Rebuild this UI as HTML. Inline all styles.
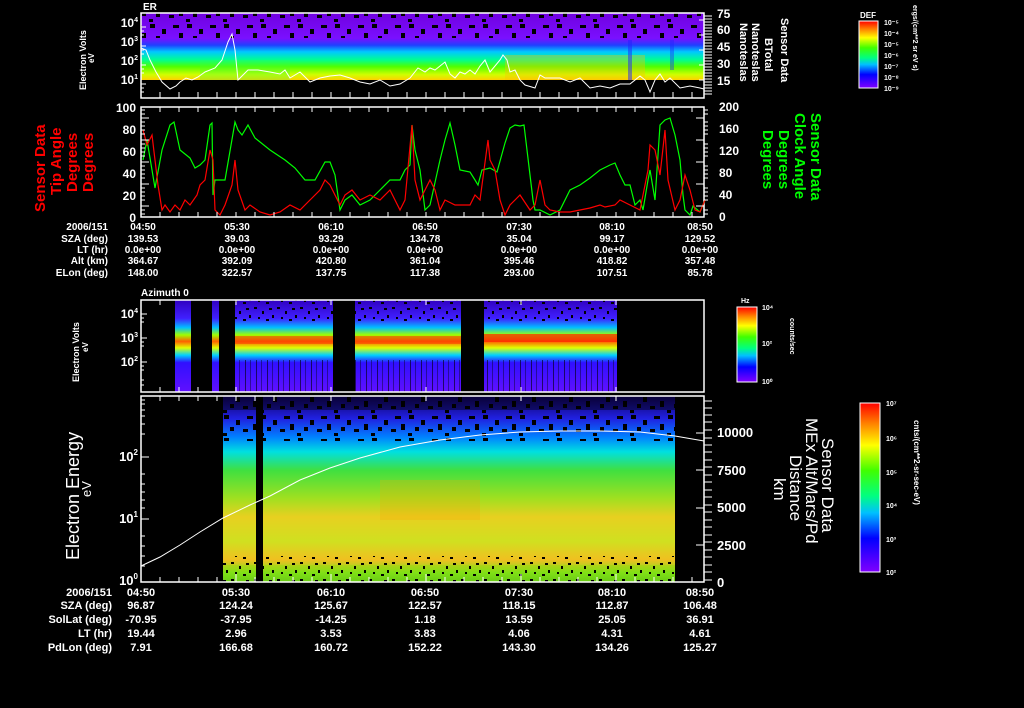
<!DOCTYPE html>
<html><head><meta charset="utf-8"><style>
html,body{margin:0;padding:0;background:#000;width:1024px;height:708px;overflow:hidden}
svg{display:block}
text{font-family:"Liberation Sans",sans-serif;font-weight:bold;fill:#fff}
</style></head><body>
<svg width="1024" height="708" viewBox="0 0 1024 708" xmlns="http://www.w3.org/2000/svg">
<defs>
<linearGradient id="rb" x1="0" y1="1" x2="0" y2="0">
<stop offset="0" stop-color="#8000ff"/><stop offset="0.2" stop-color="#0000ff"/><stop offset="0.35" stop-color="#00c0ff"/><stop offset="0.45" stop-color="#00ff80"/><stop offset="0.6" stop-color="#40ff00"/><stop offset="0.75" stop-color="#ffff00"/><stop offset="0.88" stop-color="#ff8000"/><stop offset="1" stop-color="#ff0000"/>
</linearGradient>
<linearGradient id="p1" x1="0" y1="0" x2="0" y2="1">
<stop offset="0" stop-color="#7000e0"/><stop offset="0.38" stop-color="#7a10ff"/><stop offset="0.48" stop-color="#2040ff"/><stop offset="0.58" stop-color="#00c8ff"/><stop offset="0.7" stop-color="#00ff90"/><stop offset="0.8" stop-color="#50ff00"/><stop offset="0.92" stop-color="#d0ff00"/><stop offset="1" stop-color="#ffd000"/>
</linearGradient>
<linearGradient id="p3" x1="0" y1="0" x2="0" y2="1">
<stop offset="0" stop-color="#3000c0"/><stop offset="0.2" stop-color="#4020ff"/><stop offset="0.3" stop-color="#00c0ff"/><stop offset="0.38" stop-color="#a0ff00"/><stop offset="0.45" stop-color="#ff6000"/><stop offset="0.52" stop-color="#e0ff00"/><stop offset="0.6" stop-color="#00d0ff"/><stop offset="0.68" stop-color="#3010ff"/><stop offset="1" stop-color="#6010ff"/>
</linearGradient>
<linearGradient id="p4" x1="0" y1="0" x2="0" y2="1">
<stop offset="0" stop-color="#100060"/><stop offset="0.12" stop-color="#2020e0"/><stop offset="0.22" stop-color="#0080ff"/><stop offset="0.3" stop-color="#00e0e0"/><stop offset="0.4" stop-color="#40e040"/><stop offset="0.55" stop-color="#a0e020"/><stop offset="0.65" stop-color="#e8d020"/><stop offset="0.78" stop-color="#d0e020"/><stop offset="0.88" stop-color="#f0c020"/><stop offset="0.95" stop-color="#80e020"/><stop offset="1" stop-color="#60c020"/>
</linearGradient>
<pattern id="spk" width="37" height="23" patternUnits="userSpaceOnUse">
<rect x="2" y="1" width="5" height="4" fill="#000"/><rect x="14" y="6" width="4" height="5" fill="#000"/><rect x="25" y="2" width="6" height="3" fill="#000"/><rect x="8" y="13" width="4" height="4" fill="#000"/><rect x="21" y="15" width="5" height="3" fill="#000"/><rect x="31" y="10" width="4" height="6" fill="#000"/><rect x="1" y="19" width="4" height="3" fill="#000"/>
</pattern>
<pattern id="spk2" width="23" height="17" patternUnits="userSpaceOnUse">
<rect x="1" y="1" width="3" height="2" fill="#000"/><rect x="9" y="5" width="2" height="3" fill="#000"/><rect x="16" y="2" width="3" height="2" fill="#000"/><rect x="5" y="11" width="2" height="2" fill="#000"/><rect x="13" y="13" width="3" height="2" fill="#000"/><rect x="19" y="9" width="2" height="3" fill="#000"/>
</pattern>
<pattern id="vln" width="11" height="10" patternUnits="userSpaceOnUse">
<rect x="3" y="0" width="1" height="10" fill="#000" opacity="0.6"/><rect x="8" y="0" width="1" height="10" fill="#000" opacity="0.4"/>
</pattern>
</defs>

<!-- Panel 1 -->
<text x="143" y="10" font-size="10">ER</text>
<rect x="141" y="13" width="563" height="67" fill="url(#p1)"/>
<rect x="141" y="13" width="563" height="25" fill="url(#spk)"/>
<rect x="200" y="60" width="90" height="20" fill="#40ff40" opacity="0.3"/>
<rect x="505" y="55" width="140" height="25" fill="#ffc000" opacity="0.35"/>
<rect x="628" y="40" width="4" height="40" fill="#2020ff" opacity="0.5"/>
<rect x="670" y="40" width="4" height="30" fill="#2020ff" opacity="0.4"/>
<polyline fill="none" stroke="#fff" stroke-width="1" points="141,48 146,50 150,60 156,72 162,82 170,89 176,86 180,82 186,78 192,80 198,77 205,72 210,70 215,68 222,60 228,42 232,34 235,50 238,80 242,76 248,70 258,70 270,72 280,74 285,70 290,78 300,72 310,82 320,78 330,76 340,75 350,78 360,82 370,84 380,80 390,86 400,84 410,78 418,68 425,72 430,68 435,70 445,62 450,74 455,78 460,72 465,74 470,70 475,74 480,66 485,60 490,72 495,66 500,60 503,55 507,60 510,72 515,70 520,80 525,85 535,88 540,75 545,78 560,78 570,82 580,78 590,88 600,86 610,88 620,84 630,84 640,76 645,80 650,92 655,80 660,74 665,82 670,78 680,88 690,86 700,88 704,89"/>
<rect x="141" y="13" width="563" height="85" fill="none" stroke="#fff" stroke-width="1.5"/>
<g stroke="#fff" stroke-width="1">
<path d="M141,27h5M141,46h5M141,65h5M141,84h5M141,31h3M141,35h3M141,50h3M141,54h3M141,69h3M141,73h3M141,88h3M141,92h3"/>
<path d="M704,13v85M704,20h-5M704,35h-5M704,50h-5M704,65h-5M704,80h-5M704,16h8M704,19h8M704,22h8M704,25h8M704,28h8M704,31h8M704,34h8M704,37h8M704,40h8M704,43h8M704,46h8M704,49h8M704,52h8M704,55h8M704,58h8M704,61h8M704,64h8M704,67h8M704,70h8M704,73h8M704,76h8M704,79h8M704,82h8M704,85h8M704,88h8M704,91h8M704,94h8"/>
<path d="M160,98v-6M179,98v-6M198,98v-6M217,98v-6M236,98v-6M255,98v-6M274,98v-6M293,98v-6M312,98v-6M331,98v-6M350,98v-6M369,98v-6M388,98v-6M407,98v-6M426,98v-6M445,98v-6M464,98v-6M483,98v-6M502,98v-6M521,98v-6M540,98v-6M559,98v-6M578,98v-6M597,98v-6M616,98v-6M635,98v-6M654,98v-6M673,98v-6M692,98v-6"/>
</g>
<g font-size="12" text-anchor="end"><text x="138" y="27">10<tspan font-size="7" dy="-5">4</tspan></text><text x="138" y="46">10<tspan font-size="7" dy="-5">3</tspan></text><text x="138" y="65">10<tspan font-size="7" dy="-5">2</tspan></text><text x="138" y="84">10<tspan font-size="7" dy="-5">1</tspan></text></g>
<g font-size="12"><text x="717" y="18">75</text><text x="717" y="34">60</text><text x="717" y="51">45</text><text x="717" y="68">30</text><text x="717" y="85">15</text></g>
<text font-size="9" transform="translate(86,90) rotate(-90)">Electron Volts</text>
<text font-size="8" transform="translate(94,63) rotate(-90)">eV</text>
<g font-size="11" transform="rotate(90)"><text x="18" y="-781">Sensor Data</text><text x="38" y="-765">BTotal</text><text x="23" y="-752">Nanoteslas</text><text x="23" y="-740">Nanoteslas</text></g>
<text x="860" y="18" font-size="8">DEF</text>
<rect x="859" y="21" width="19" height="67" fill="url(#rb)" stroke="#fff"/>
<g font-size="7"><text x="884" y="25">10⁻⁵</text><text x="884" y="36">10⁻⁴</text><text x="884" y="47">10⁻⁵</text><text x="884" y="58">10⁻⁶</text><text x="884" y="69">10⁻⁷</text><text x="884" y="80">10⁻⁸</text><text x="884" y="91">10⁻⁹</text></g>
<text font-size="7" transform="translate(913,5) rotate(90)">ergs/(cm**2 sr eV s)</text>

<!-- Panel 2 -->
<rect x="141" y="107" width="563" height="110" fill="none" stroke="#fff" stroke-width="1.5"/>
<polyline fill="none" stroke="#00ff00" stroke-width="1.2" points="143,160 147,140 152,170 155,188 162,150 170,125 174,122 180,150 190,158 195,168 200,165 205,160 210,125 212,123 213,195 215,180 225,180 235,122 238,130 242,135 248,125 255,138 270,150 285,160 295,168 305,180 315,180 325,162 330,162 335,175 340,210 345,200 352,195 360,205 370,200 380,190 390,180 400,180 405,170 410,165 412,125 415,150 420,170 425,210 430,205 440,160 445,140 450,123 455,145 460,170 470,172 475,180 478,185 482,170 490,168 497,172 505,143 510,128 515,125 520,126 524,125 533,200 535,210 540,210 550,215 560,210 570,190 580,185 590,178 600,170 610,165 615,163 620,175 625,185 630,185 635,205 640,200 643,210 648,180 650,170 655,200 660,125 665,120 670,118 675,135 680,160 683,195 685,210 690,215 693,206 700,212 705,200"/>
<polyline fill="none" stroke="#ff0000" stroke-width="1.2" points="143,130 147,145 152,135 158,185 162,210 165,205 170,212 175,205 180,210 185,200 190,205 197,195 200,185 205,180 210,150 213,160 215,210 220,215 225,205 232,185 235,160 238,190 245,210 250,205 260,212 270,215 280,212 290,205 300,210 310,200 320,190 325,180 330,185 340,205 345,195 352,190 360,200 370,195 380,200 390,190 400,210 405,200 412,125 415,180 420,200 430,180 435,190 440,210 445,200 455,205 465,205 470,205 475,195 480,200 488,140 490,160 495,170 500,200 505,215 510,205 515,200 520,195 530,210 535,205 540,180 545,205 550,210 560,212 570,212 580,210 590,208 600,205 605,207 615,205 620,200 630,205 640,210 648,170 650,145 655,150 660,175 665,130 668,180 675,210 680,200 685,175 690,190 695,210 700,212 705,200"/>
<g stroke="#fff" stroke-width="1">
<path d="M141,118h8M141,140h8M141,162h8M141,184h8M141,206h8M141,110h4M141,114h4M141,122h4M141,126h4M141,130h4M141,134h4M141,144h4M141,148h4M141,152h4M141,156h4M141,166h4M141,170h4M141,174h4M141,178h4M141,188h4M141,192h4M141,196h4M141,200h4M141,210h4M141,214h4"/>
<path d="M704,118h-8M704,140h-8M704,162h-8M704,184h-8M704,206h-8M704,110h4M704,114h4M704,122h4M704,126h4M704,130h4M704,134h4M704,144h4M704,148h4M704,152h4M704,156h4M704,166h4M704,170h4M704,174h4M704,178h4M704,188h4M704,192h4M704,196h4M704,200h4M704,210h4M704,214h4"/>
<path d="M160,107v5M179,107v5M198,107v5M217,107v5M236,107v5M255,107v5M274,107v5M293,107v5M312,107v5M331,107v5M350,107v5M369,107v5M388,107v5M407,107v5M426,107v5M445,107v5M464,107v5M483,107v5M502,107v5M521,107v5M540,107v5M559,107v5M578,107v5M597,107v5M616,107v5M635,107v5M654,107v5M673,107v5M692,107v5"/>
<path d="M160,217v-5M179,217v-5M198,217v-5M217,217v-5M236,217v-5M255,217v-5M274,217v-5M293,217v-5M312,217v-5M331,217v-5M350,217v-5M369,217v-5M388,217v-5M407,217v-5M426,217v-5M445,217v-5M464,217v-5M483,217v-5M502,217v-5M521,217v-5M540,217v-5M559,217v-5M578,217v-5M597,217v-5M616,217v-5M635,217v-5M654,217v-5M673,217v-5M692,217v-5"/>
</g>
<g font-size="12" text-anchor="end"><text x="136" y="112">100</text><text x="136" y="134">80</text><text x="136" y="156">60</text><text x="136" y="178">40</text><text x="136" y="200">20</text><text x="136" y="222">0</text></g>
<g font-size="12"><text x="719" y="111">200</text><text x="719" y="133">160</text><text x="719" y="155">120</text><text x="719" y="177">80</text><text x="719" y="199">40</text><text x="719" y="221">0</text></g>
<g font-size="15"><text transform="translate(45,212) rotate(-90)" style="fill:#f00">Sensor Data</text><text transform="translate(61,195) rotate(-90)" style="fill:#f00">Tip Angle</text><text transform="translate(77,192) rotate(-90)" style="fill:#f00">Degrees</text><text transform="translate(93,192) rotate(-90)" style="fill:#f00">Degrees</text></g>
<g font-size="15"><text transform="translate(811,113) rotate(90)" style="fill:#0f0">Sensor Data</text><text transform="translate(795,113) rotate(90)" style="fill:#0f0">Clock Angle</text><text transform="translate(779,130) rotate(90)" style="fill:#0f0">Degrees</text><text transform="translate(763,130) rotate(90)" style="fill:#0f0">Degrees</text></g>

<!-- Table 1 -->
<g font-size="10" text-anchor="end"><text x="108" y="230">2006/151</text><text x="108" y="242">SZA (deg)</text><text x="108" y="253">LT (hr)</text><text x="108" y="264">Alt (km)</text><text x="108" y="276">ELon (deg)</text></g>
<g font-size="10" text-anchor="middle">
<text x="143" y="230">04:50</text><text x="237" y="230">05:30</text><text x="331" y="230">06:10</text><text x="425" y="230">06:50</text><text x="519" y="230">07:30</text><text x="612" y="230">08:10</text><text x="700" y="230">08:50</text>
<text x="143" y="242">139.53</text><text x="237" y="242">39.03</text><text x="331" y="242">93.29</text><text x="425" y="242">134.78</text><text x="519" y="242">35.04</text><text x="612" y="242">99.17</text><text x="700" y="242">129.52</text>
<text x="143" y="253">0.0e+00</text><text x="237" y="253">0.0e+00</text><text x="331" y="253">0.0e+00</text><text x="425" y="253">0.0e+00</text><text x="519" y="253">0.0e+00</text><text x="612" y="253">0.0e+00</text><text x="700" y="253">0.0e+00</text>
<text x="143" y="264">364.67</text><text x="237" y="264">392.09</text><text x="331" y="264">420.80</text><text x="425" y="264">361.04</text><text x="519" y="264">395.46</text><text x="612" y="264">418.82</text><text x="700" y="264">357.48</text>
<text x="143" y="276">148.00</text><text x="237" y="276">322.57</text><text x="331" y="276">137.75</text><text x="425" y="276">117.38</text><text x="519" y="276">293.00</text><text x="612" y="276">107.51</text><text x="700" y="276">85.78</text>
</g>

<!-- Panel 3 -->
<text x="141" y="296" font-size="10">Azimuth 0</text>
<g fill="url(#p3)">
<rect x="175" y="300" width="16" height="92"/><rect x="212" y="300" width="7" height="92"/><rect x="235" y="300" width="98" height="92"/><rect x="355" y="300" width="106" height="92"/><rect x="484" y="300" width="133" height="92"/>
</g>
<rect x="235" y="336" width="98" height="8" fill="#ff3000" opacity="0.5"/>
<rect x="355" y="336" width="106" height="8" fill="#ff3000" opacity="0.5"/>
<rect x="484" y="334" width="133" height="8" fill="#ff2000" opacity="0.7"/>
<g fill="url(#vln)"><rect x="235" y="360" width="98" height="32"/><rect x="355" y="360" width="106" height="32"/><rect x="484" y="360" width="133" height="32"/></g>
<g fill="url(#spk2)"><rect x="235" y="300" width="98" height="22"/><rect x="355" y="300" width="106" height="22"/><rect x="484" y="300" width="133" height="22"/></g>
<rect x="141" y="300" width="563" height="92" fill="none" stroke="#fff" stroke-width="1.5"/>
<g stroke="#fff" stroke-width="1"><path d="M141,314h6M141,338h6M141,362h6M141,318h3M141,322h3M141,342h3M141,346h3M141,366h3M141,370h3M141,380h3M141,385h3"/>
<path d="M160,392v-5M179,392v-5M198,392v-5M236,392v-5M331,392v-5M426,392v-5M521,392v-5M616,392v-5M704,300v92M160,300v5M236,300v5M331,300v5M426,300v5M521,300v5M616,300v5"/></g>
<g font-size="12" text-anchor="end"><text x="138" y="318">10<tspan font-size="7" dy="-5">4</tspan></text><text x="138" y="342">10<tspan font-size="7" dy="-5">3</tspan></text><text x="138" y="366">10<tspan font-size="7" dy="-5">2</tspan></text></g>
<text font-size="9" transform="translate(79,382) rotate(-90)">Electron Volts</text>
<text font-size="8" transform="translate(88,352) rotate(-90)">eV</text>
<text x="741" y="303" font-size="7">Hz</text>
<rect x="737" y="307" width="20" height="75" fill="url(#rb)" stroke="#fff"/>
<g font-size="7"><text x="762" y="310">10⁴</text><text x="762" y="346">10²</text><text x="762" y="384">10⁰</text></g>
<text font-size="7" transform="translate(790,318) rotate(90)">counts/sec</text>

<!-- Panel 4 -->
<rect x="223" y="396" width="452" height="186" fill="url(#p4)"/>
<rect x="223" y="396" width="452" height="14" fill="#000" opacity="0.4"/>
<rect x="223" y="396" width="452" height="45" fill="url(#spk)"/>
<rect x="223" y="565" width="452" height="17" fill="#80e000" opacity="0.3"/>
<rect x="223" y="556" width="452" height="26" fill="url(#spk2)"/>
<rect x="380" y="480" width="100" height="40" fill="#ffa000" opacity="0.25"/>
<rect x="256" y="396" width="7" height="186" fill="#000"/>
<polyline fill="none" stroke="#fff" stroke-width="1" points="141,566 160,557 180,545 200,532 223,518 250,505 270,496 300,480 330,468 360,458 400,447 440,440 480,435 520,432 560,431 600,431 640,432 675,436 704,441"/>
<rect x="141" y="396" width="563" height="186" fill="none" stroke="#fff" stroke-width="1.5"/>
<g stroke="#fff" stroke-width="1"><path d="M141,457h8M141,519h8M141,400h4M141,404h4M141,410h4M141,416h4M141,424h4M141,434h4M141,474h4M141,484h4M141,492h4M141,500h4M141,508h4M141,536h4M141,546h4M141,556h4M141,566h4"/>
<path d="M704,433h-8M704,470h-8M704,508h-8M704,545h-8M704,401h8M704,408h8M704,415h8M704,422h8M704,430h8M704,438h8M704,445h8M704,452h8M704,460h8M704,467h8M704,475h8M704,482h8M704,490h8M704,497h8M704,505h8M704,512h8M704,520h8M704,527h8M704,535h8M704,542h8M704,550h8M704,557h8M704,565h8M704,572h8M704,580h8"/>
<path d="M160,582v-5M179,582v-5M198,582v-5M217,582v-5M236,582v-8M255,582v-5M274,582v-5M293,582v-5M312,582v-5M331,582v-8M350,582v-5M369,582v-5M388,582v-5M407,582v-5M426,582v-8M445,582v-5M464,582v-5M483,582v-5M502,582v-5M521,582v-8M540,582v-5M559,582v-5M578,582v-5M597,582v-5M616,582v-8M635,582v-5M654,582v-5M673,582v-5M692,582v-5"/>
<path d="M160,396v5M179,396v5M198,396v5M217,396v5M236,396v5M255,396v5M274,396v5M331,396v5M426,396v5M521,396v5M616,396v5"/></g>
<g font-size="13" text-anchor="end"><text x="138" y="461">10<tspan font-size="8" dy="-6">2</tspan></text><text x="138" y="523">10<tspan font-size="8" dy="-6">1</tspan></text><text x="138" y="585">10<tspan font-size="8" dy="-6">0</tspan></text></g>
<g font-size="13"><text x="717" y="437">10000</text><text x="717" y="475">7500</text><text x="717" y="512">5000</text><text x="717" y="550">2500</text><text x="717" y="587">0</text></g>
<text font-size="18" transform="translate(79,560) rotate(-90)" style="font-weight:normal">Electron Energy</text>
<text font-size="13" transform="translate(91,497) rotate(-90)" style="font-weight:normal">eV</text>
<g font-size="17" transform="rotate(90)"><text x="438" y="-822" style="font-weight:normal">Sensor Data</text><text x="418" y="-806" style="font-weight:normal">MEx Alt/Mars/Pd</text><text x="455" y="-790" style="font-weight:normal">Distance</text><text x="478" y="-774" style="font-weight:normal">km</text></g>
<rect x="860" y="403" width="20" height="169" fill="url(#rb)" stroke="#fff"/>
<g font-size="7"><text x="886" y="406">10⁷</text><text x="886" y="441">10⁶</text><text x="886" y="475">10⁵</text><text x="886" y="508">10⁴</text><text x="886" y="542">10³</text><text x="886" y="575">10²</text></g>
<text font-size="8" transform="translate(914,420) rotate(90)">cnts/(cm**2-sr-sec-eV)</text>

<!-- Table 2 -->
<g font-size="11" text-anchor="end"><text x="112" y="596">2006/151</text><text x="112" y="609">SZA (deg)</text><text x="112" y="623">SolLat (deg)</text><text x="112" y="637">LT (hr)</text><text x="112" y="651">PdLon (deg)</text></g>
<g font-size="11" text-anchor="middle">
<text x="141" y="596">04:50</text><text x="236" y="596">05:30</text><text x="331" y="596">06:10</text><text x="425" y="596">06:50</text><text x="519" y="596">07:30</text><text x="612" y="596">08:10</text><text x="700" y="596">08:50</text>
<text x="141" y="609">96.87</text><text x="236" y="609">124.24</text><text x="331" y="609">125.67</text><text x="425" y="609">122.57</text><text x="519" y="609">118.15</text><text x="612" y="609">112.87</text><text x="700" y="609">106.48</text>
<text x="141" y="623">-70.95</text><text x="236" y="623">-37.95</text><text x="331" y="623">-14.25</text><text x="425" y="623">1.18</text><text x="519" y="623">13.59</text><text x="612" y="623">25.05</text><text x="700" y="623">36.91</text>
<text x="141" y="637">19.44</text><text x="236" y="637">2.96</text><text x="331" y="637">3.53</text><text x="425" y="637">3.83</text><text x="519" y="637">4.06</text><text x="612" y="637">4.31</text><text x="700" y="637">4.61</text>
<text x="141" y="651">7.91</text><text x="236" y="651">166.68</text><text x="331" y="651">160.72</text><text x="425" y="651">152.22</text><text x="519" y="651">143.30</text><text x="612" y="651">134.26</text><text x="700" y="651">125.27</text>
</g>
</svg>
</body></html>
